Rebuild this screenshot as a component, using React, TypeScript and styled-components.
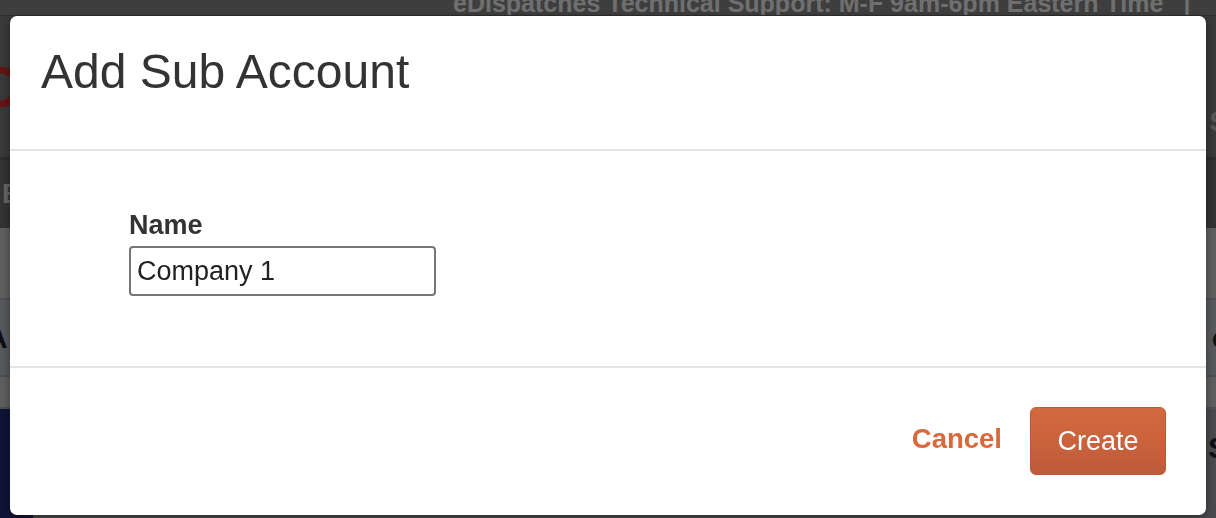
import React, { useState } from "react";
import styled, { createGlobalStyle } from "styled-components";

const GlobalStyle = createGlobalStyle`
  html, body {
    margin: 0;
    padding: 0;
    height: 100%;
    overflow: hidden;
  }
  body {
    font-family: "Liberation Sans", Arial, Helvetica, sans-serif;
  }
`;

const Page = styled.div`
  display: flex;
  flex-direction: column;
  height: 100vh;
  background: #8c8c90;
`;

const TopBar = styled.div`
  height: 15px;
  flex-shrink: 0;
  display: flex;
  align-items: flex-start;
  padding-left: 453px;
  overflow: hidden;
  background: #7c7c7c;
  border-bottom: 1px solid #5a5a5a;
  white-space: nowrap;
`;

const SupportText = styled.span`
  margin-top: -9px;
  font-size: 25px;
  line-height: 25px;
  font-weight: bold;
  color: #dedede;
`;

const Separator = styled.span`
  margin: -9px 0 0 20px;
  font-size: 25px;
  line-height: 25px;
  font-weight: bold;
  color: #dedede;
`;

const BrandBar = styled.div`
  height: 141px;
  flex-shrink: 0;
  display: flex;
  align-items: center;
  justify-content: space-between;
  background: #727272;
  border-bottom: 3px solid #5c5c5c;
  overflow: hidden;
`;

const Logo = styled.svg`
  margin-left: -24px;
`;

const BrandLink = styled.span`
  margin: 70px -12px 0 0;
  font-size: 28px;
  font-weight: bold;
  color: #b0b0b0;
`;

const NavBar = styled.div`
  height: 68px;
  flex-shrink: 0;
  display: flex;
  align-items: center;
  background: #666;
  overflow: hidden;
`;

const NavItem = styled.span`
  margin-left: 2px;
  font-size: 27px;
  font-weight: bold;
  color: #c8c8c8;
`;

const Band = styled.div<{ $tone: string; $h: number }>`
  height: ${(p) => p.$h}px;
  flex-shrink: 0;
  display: flex;
  align-items: center;
  justify-content: space-between;
  background: ${(p) => p.$tone};
  border-bottom: 2px solid #9e9e9e;
  overflow: hidden;
`;

const ColHead = styled.span<{ $edge: "left" | "right" }>`
  font-size: 30px;
  font-weight: bold;
  color: #1c1e2c;
  ${(p) => (p.$edge === "left" ? "margin-left: -14px;" : "margin-right: -14px;")}
`;

const Lower = styled.div`
  flex: 1;
  display: flex;
`;

const Sidebar = styled.div`
  width: 33px;
  background: #1e286e;
`;

const Content = styled.div`
  flex: 1;
  display: flex;
  justify-content: flex-end;
  padding-top: 22px;
  background: #94949c;
  overflow: hidden;
`;

const ContentText = styled.span`
  margin-right: -12px;
  font-size: 30px;
  font-weight: bold;
  color: #1c1e2c;
`;

const Overlay = styled.div`
  position: fixed;
  inset: 0;
  display: flex;
  flex-direction: column;
  padding: 16px 10px 3px;
  background: rgba(0, 0, 0, 0.5);
`;

const Modal = styled.form`
  flex: 1;
  display: flex;
  flex-direction: column;
  background: #fff;
  border-radius: 7px;
  box-shadow: 0 3px 9px rgba(0, 0, 0, 0.4);
  color: #333;
`;

const ModalHeader = styled.div`
  padding: 29px 30px 51px 31px;
  border-bottom: 2px solid #e5e5e5;
`;

const Title = styled.h4`
  margin: 0;
  font-size: 48px;
  line-height: 53px;
  font-weight: normal;
  color: #333;
`;

const ModalBody = styled.div`
  display: flex;
  flex-direction: column;
  align-items: flex-start;
  padding: 59px 30px 70px 119px;
  border-bottom: 2px solid #e5e5e5;
`;

const Label = styled.label`
  font-size: 27px;
  line-height: 30px;
  font-weight: bold;
  color: #333;
  margin-bottom: 6px;
`;

const TextInput = styled.input`
  box-sizing: border-box;
  width: 307px;
  height: 50px;
  padding: 0 6px;
  border: 2px solid #767676;
  border-radius: 4px;
  font-family: inherit;
  font-size: 27px;
  color: #222;
  outline: none;
`;

const ModalFooter = styled.div`
  flex: 1;
  display: flex;
  align-items: flex-start;
  justify-content: flex-end;
  padding: 39px 40px 0;
`;

const LinkButton = styled.button`
  height: 68px;
  margin-right: 28px;
  padding: 0 0 5px;
  border: none;
  background: none;
  font-family: inherit;
  font-size: 27.5px;
  font-weight: bold;
  color: #d9693b;
  cursor: pointer;
`;

const PrimaryButton = styled.button`
  box-sizing: border-box;
  width: 136px;
  height: 68px;
  border: 1px solid #bf5a38;
  border-radius: 6px;
  background: linear-gradient(#d4693f, #bf5b3a);
  font-family: inherit;
  font-size: 27px;
  color: #fff;
  cursor: pointer;
`;

export default function App() {
  const [name, setName] = useState("Company 1");

  return (
    <>
      <GlobalStyle />
      <Page>
        <TopBar>
          <SupportText>eDispatches Technical Support: M-F 9am-6pm Eastern Time</SupportText>
          <Separator>|</Separator>
        </TopBar>
        <BrandBar>
          <Logo width="48" height="48" viewBox="0 0 48 48">
            <circle cx="24" cy="24" r="17" fill="none" stroke="#c42a22" strokeWidth="7" />
          </Logo>
          <BrandLink>S</BrandLink>
        </BrandBar>
        <NavBar>
          <NavItem>E</NavItem>
        </NavBar>
        <Band $tone="#bcbcbc" $h={70} />
        <Band $tone="#aeb0b8" $h={75}>
          <ColHead $edge="left">A</ColHead>
          <ColHead $edge="right">o</ColHead>
        </Band>
        <Band $tone="#bcbcbc" $h={30} />
        <Lower>
          <Sidebar />
          <Content>
            <ContentText>S</ContentText>
          </Content>
        </Lower>
      </Page>
      <Overlay>
        <Modal onSubmit={(e) => e.preventDefault()}>
          <ModalHeader>
            <Title>Add Sub Account</Title>
          </ModalHeader>
          <ModalBody>
            <Label htmlFor="sub-account-name">Name</Label>
            <TextInput
              id="sub-account-name"
              value={name}
              onChange={(e) => setName(e.target.value)}
            />
          </ModalBody>
          <ModalFooter>
            <LinkButton type="button">Cancel</LinkButton>
            <PrimaryButton type="submit">Create</PrimaryButton>
          </ModalFooter>
        </Modal>
      </Overlay>
    </>
  );
}
